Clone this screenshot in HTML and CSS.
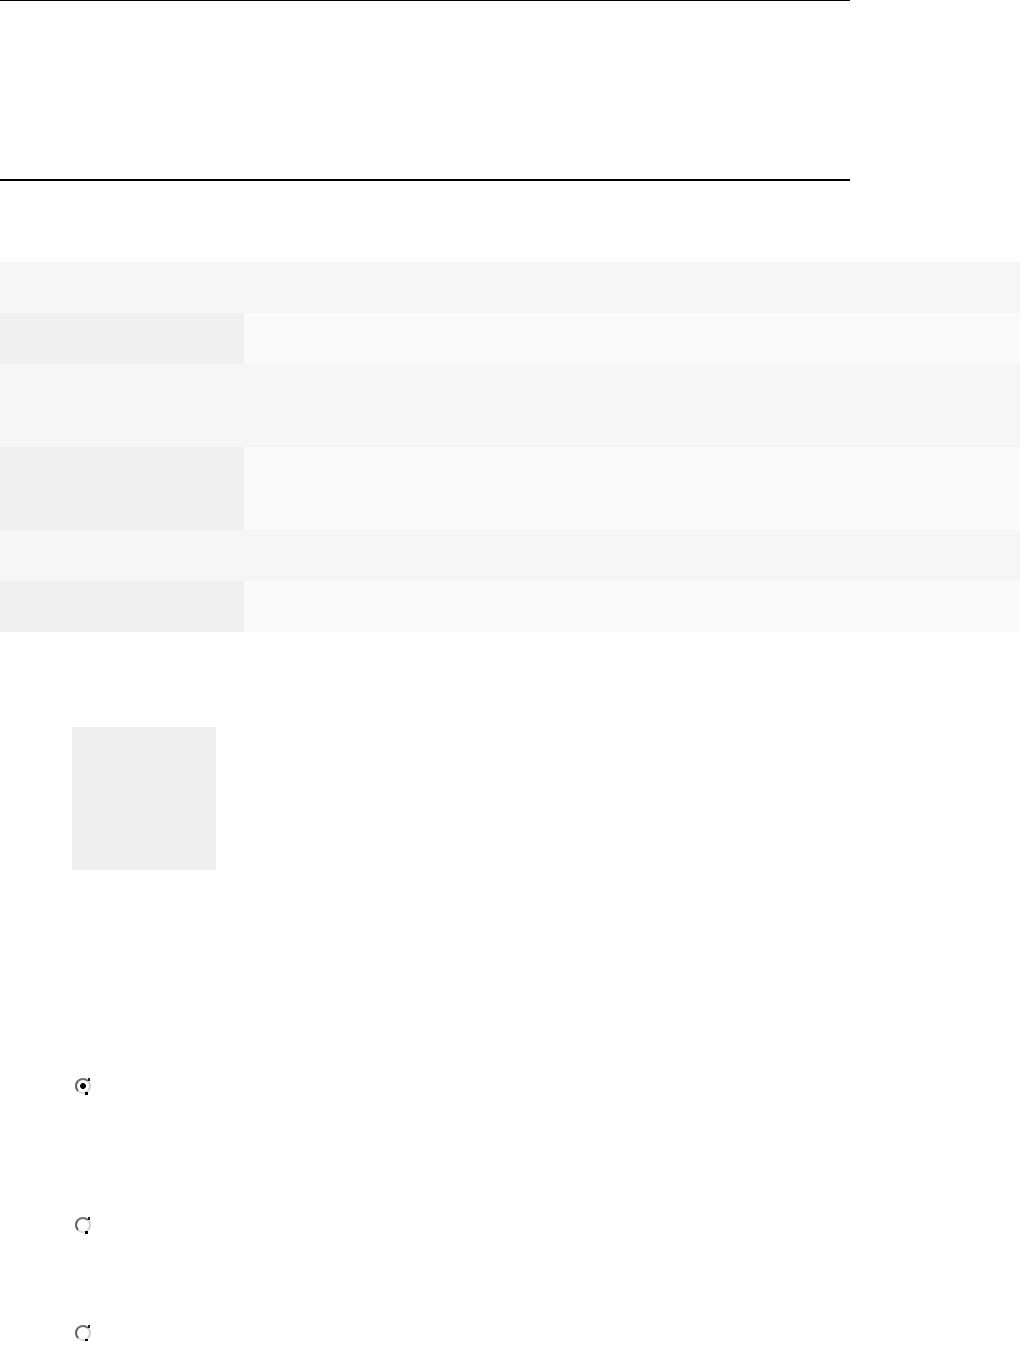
FILE: index.html
```html
<!DOCTYPE html>
<html>
<head>
<meta charset="utf-8">
<link rel="stylesheet" href="styles.css">
</head>
<body>
<div class="rule-thin"></div>
<div class="header-space"></div>
<div class="rule-thick"></div>
<table class="grid">
  <tr class="row-full"><td colspan="2"></td></tr>
  <tr class="row-split"><td class="cell-label"></td><td class="cell-value"></td></tr>
  <tr class="row-full tall"><td colspan="2"></td></tr>
  <tr class="row-split tall"><td class="cell-label"></td><td class="cell-value"></td></tr>
  <tr class="row-full"><td colspan="2"></td></tr>
  <tr class="row-split"><td class="cell-label"></td><td class="cell-value"></td></tr>
</table>
<div class="thumb"></div>
<div class="options">
  <div class="option first"><span class="radio checked"></span></div>
  <div class="option second"><span class="radio"></span></div>
  <div class="option third"><span class="radio"></span></div>
</div>
</body>
</html>
```
FILE: styles.css
```css
html, body {
  margin: 0;
  padding: 0;
  background: #ffffff;
  font-family: "Liberation Sans", Arial, sans-serif;
}
.rule-thin {
  width: 850px;
  height: 1px;
  background: #000;
}
.header-space {
  height: 178px;
}
.rule-thick {
  width: 850px;
  height: 2px;
  background: #000;
}
.grid {
  margin-top: 81px;
  width: 1020px;
  border-collapse: collapse;
  border-spacing: 0;
}
.grid td {
  padding: 0;
  height: 51px;
}
.grid .tall td {
  height: 83px;
}
.row-full td {
  background: #f6f6f6;
}
.cell-label {
  width: 244px;
  background: #f0f0f0;
}
.cell-value {
  background: #fafafa;
}
.thumb {
  margin-top: 95px;
  margin-left: 72px;
  width: 144px;
  height: 143px;
  background: #efefef;
}
.options {
  padding-left: 75px;
}
.option {
  height: 16px;
}
.option.first { margin-top: 208px; }
.option.second { margin-top: 123px; }
.option.third { margin-top: 92px; }
.radio {
  position: relative;
  display: block;
  width: 12px;
  height: 12px;
  border-radius: 50%;
  border: 2px solid;
  border-color: #6e6e6e #cfcfcf #dcdcdc #5e5e5e;
  background: #fff;
}
.radio::after {
  content: "";
  position: absolute;
  right: 1px;
  bottom: -3px;
  width: 3px;
  height: 3px;
  background: #000;
}
.radio::before {
  content: "";
  position: absolute;
  right: -1px;
  top: -2px;
  width: 2px;
  height: 3px;
  background: #222;
}
.radio.checked {
  background: radial-gradient(circle at 50% 50%, #000 0 2.6px, #fff 3.2px);
}
```
